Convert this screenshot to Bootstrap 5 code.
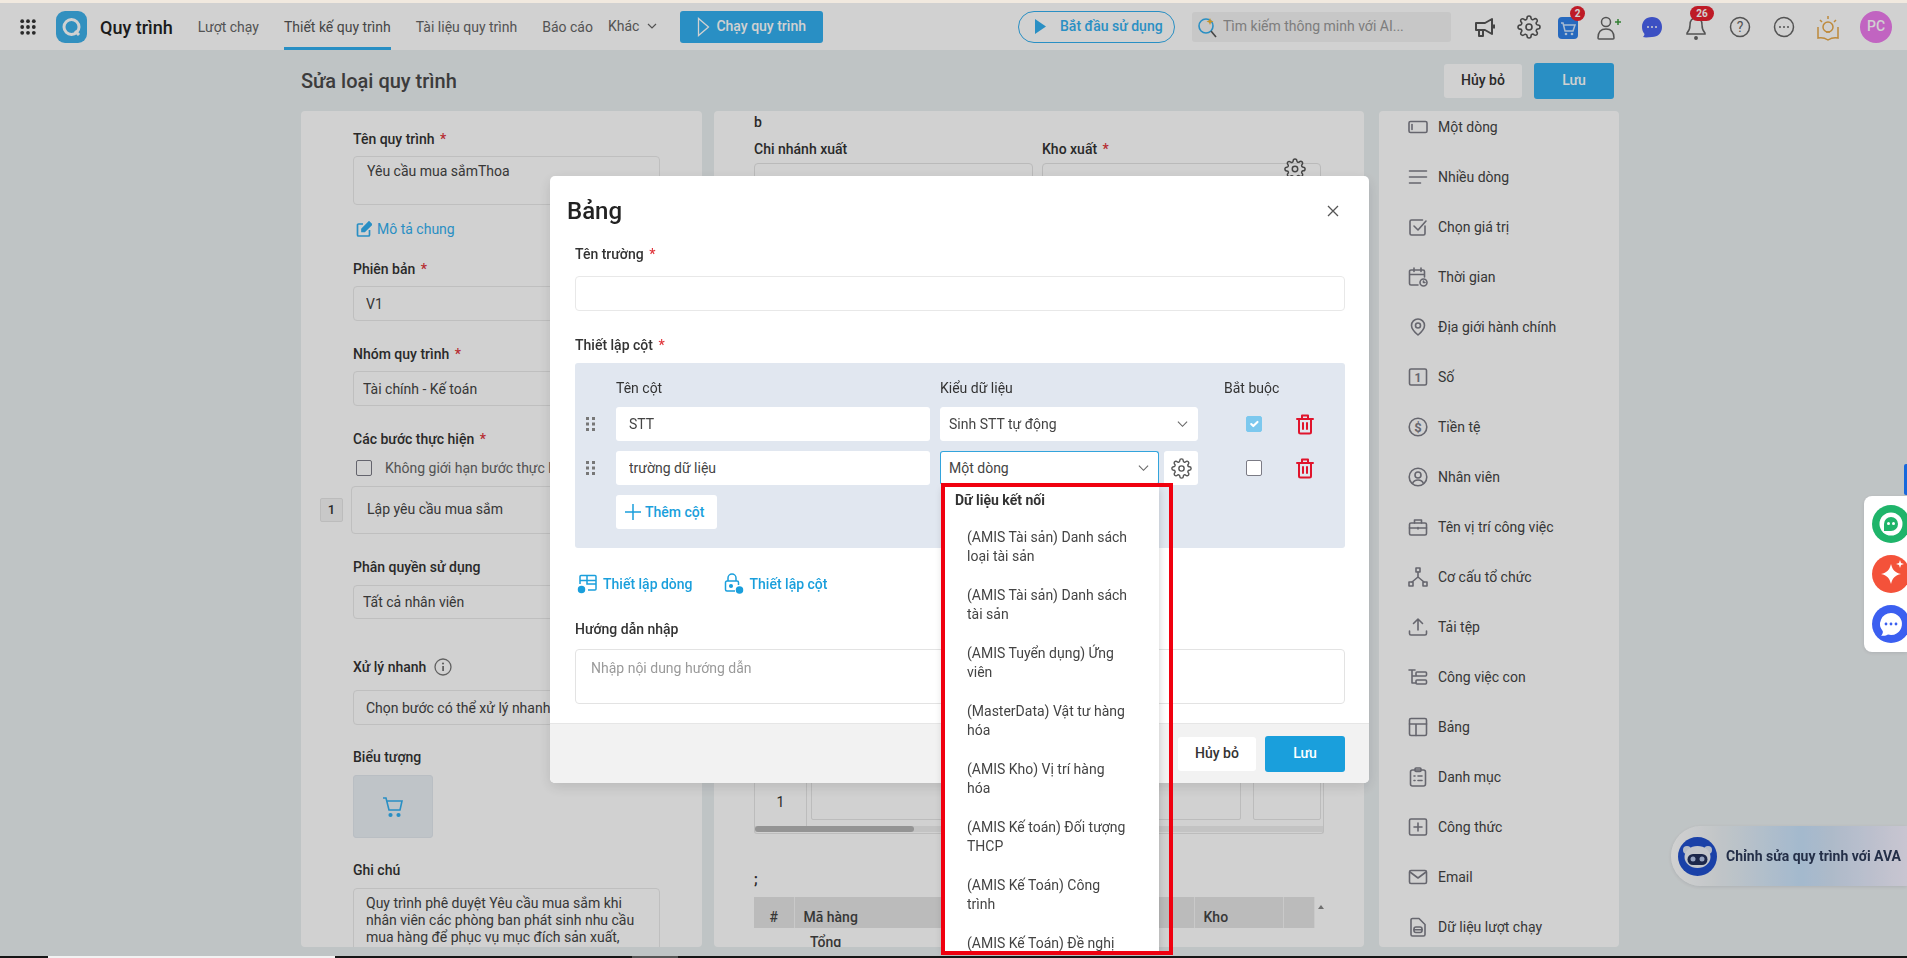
<!DOCTYPE html>
<html lang="vi">
<head>
<meta charset="utf-8">
<title>Sửa loại quy trình</title>
<link href="https://cdn.jsdelivr.net/npm/bootstrap@5.3.0/dist/css/bootstrap.min.css" rel="stylesheet">
<style>
html,body{height:100%;overflow:hidden}
body{font-family:Roboto,"Liberation Sans",sans-serif;font-size:14px;color:#333;background:#eaeff1}
svg{display:block;flex:none}
.ico{fill:none;stroke:#7d7d87;stroke-width:1.6;stroke-linecap:round;stroke-linejoin:round}
.ico.ico-dark{stroke:#555}
.ico.ico-red{stroke:#e0142c;stroke-width:2}
.shell{height:958px;display:flex;flex-direction:column}
.strip-top{height:3px;background:#f1e9df;flex:none}
.strip-bottom{height:2px;flex:none;background:#161616;display:flex}
.seg-white{width:287px;margin-left:48px;background:#f2f2f2}
.seg-grey{width:46px;margin-left:297px;background:#555}
.topbar{height:47px;flex:none;background:#fff;padding:0 15px 0 20px;display:flex;align-items:center;flex-wrap:nowrap}
.brand-logo{margin-left:20px}
.brand-name{margin-left:13px;margin-top:1px;font-size:18px;font-weight:500;color:#222;margin-right:25px;white-space:nowrap}
.top-nav{display:flex;flex-wrap:nowrap;gap:25px;height:47px;align-items:stretch}
.top-nav .nav-link{padding:0;height:47px;line-height:49px;border-bottom:3px solid transparent;color:#666;white-space:nowrap;font-size:14px}
.top-nav .nav-link.current{color:#555;border-bottom-color:#33afef}
.more-link{display:flex;align-items:center;gap:8px;margin-left:-10px;padding-top:2px!important}
.run-btn{margin-left:23px;height:32px;width:143px;display:flex;align-items:center;gap:6px;padding:0 0 0 17px;background:#33afef;border:0;border-radius:3px;color:#fff;font-weight:500;font-size:14px;white-space:nowrap}
.start-pill{margin-left:auto;width:157px;height:32px;border:1.5px solid #33afef;border-radius:16px;display:flex;align-items:center;padding-left:16px;gap:14px;color:#33afef;font-weight:500;background:transparent;white-space:nowrap;font-size:14px}
.ai-search{margin-left:17px;width:259px;height:30px;background:#f3f3f3;border-radius:3px;display:flex;align-items:center;padding-left:4px;gap:5px}
.ai-search input{border:0;background:transparent;outline:0;width:220px;font-size:14px;color:#888;padding:0}
.ai-search input::placeholder{color:#999}
.tool-row{display:flex;align-items:center;margin-left:22px}
.tool-slot{position:relative;width:24px;height:24px;margin-left:20px}
.tool-slot:first-child{margin-left:0}
.tool-slot.shift-cart{margin-left:15px}
.tool-slot.shift-user{margin-left:16px}
.red-dot{position:absolute;top:-9px;left:14px;min-width:15px;height:15px;padding:0 3px;border-radius:8px;background:#e8202f;color:#fff;font-size:10px;font-weight:700;line-height:15px;text-align:center}
.red-dot.wide{width:24px;left:6px;top:-9px}
.avatar-pc{margin-left:20px;width:32px;height:32px;border-radius:50%;background:#ec7aec;color:#fff;font-size:14px;font-weight:500;display:flex;align-items:center;justify-content:center}
.work{flex:1 1 auto;min-height:0;margin-left:301px;width:1318px;display:flex;flex-direction:column;padding-bottom:9px}
.title-row{height:61px;flex:none;display:flex;align-items:center;padding-right:5px}
.title-row h1{font-size:20px;font-weight:500;margin:0;color:#4a4a4a}
.btn-cancel{height:34px;width:78px;background:#fff;border:0;border-radius:3px;font-weight:500;font-size:14px;color:#333;padding:0}
.btn-accent{height:36px;width:80px;background:#33afef;border:0;border-radius:3px;color:#fff;font-weight:500;font-size:14px;padding:0}
.btn-accent.solid{background:#1a9fdc}
.panes{flex:1 1 auto;min-height:0;display:flex}
.pane{background:#fff;border:0;border-radius:4px;overflow:hidden}
.pane-left{width:401px;padding:18px 42px 0 52px}
.pane-mid{width:650px;margin-left:12px;padding:1px 40px 0}
.pane-right{width:240px;margin-left:15px}
.fld{font-weight:500;line-height:20px;color:#333;font-size:14px;margin:0}
.fld i{color:#e0353b;font-style:normal;margin-left:2px}
.form-control.fc{font-size:14px;height:35px;border:1px solid #e9e9e9;border-radius:4px;padding:0 12px;color:#444;box-shadow:none}
.form-control.fc.area{height:49px;padding:6px 13px;line-height:17px;resize:none}
.form-control.fc.tight{padding-left:9px}
.form-control.fc.short{height:34px}
.m7{margin-top:7px}.m8{margin-top:8px}.m13{margin-top:13px}.m14{margin-top:14px}.m20{margin-top:20px}.m22{margin-top:22px}.m23{margin-top:23px}.m38{margin-top:38px}.m9{margin-top:9px}
.desc-link{display:flex;align-items:center;gap:5px;line-height:20px;color:#33afef;margin-left:3px}
.chk-row{display:flex;align-items:center;gap:13px;margin-left:3px;height:20px;white-space:nowrap;color:#666}
.form-check-input.box{width:16px;height:16px;margin:0;border:1.5px solid #7b7b85;border-radius:2px;flex:none}
.form-check-input.box:checked{background-color:#7cc8ee;border-color:#7cc8ee}
.step-row{display:flex;align-items:center;gap:8px;margin-left:-33px;width:340px}
.step-no{width:23px;height:24px;flex:none;border:1px solid #e6e6e6;border-radius:2px;background:#f5f5f5;text-align:center;line-height:22px;font-weight:500;font-size:13px}
.form-control.fc.tall{height:48px;padding:0 0 2px 15px}
.icon-tile{width:80px;height:63px;background:#e9eff5;border:1px solid #e2e8ee;border-radius:3px;display:flex;align-items:center;justify-content:center}
.form-control.fc.notes{height:90px;padding:6px 12px;line-height:17px;resize:none}
.field-pair{display:flex;gap:9px}
.field-pair>div{flex:0 0 279px;position:relative}
.form-select.fs{height:35px;font-size:14px;border:1px solid #e3e3e3;border-radius:4px;padding:0 30px 0 8px;background-image:url("data:image/svg+xml,%3csvg xmlns='http://www.w3.org/2000/svg' viewBox='0 0 12 8'%3e%3cpath fill='none' stroke='%23666' stroke-width='1.200' d='M1 1.500l5 5 5-5'/%3e%3c/svg%3e");background-size:11px 8px;background-position:right 9px center;box-shadow:none;color:#444}
.cog-over{position:absolute;right:15px;top:19px}
.hidden-gap{height:574px}
.row-block{width:570px;height:62px;border:1px solid #e6e6e6;border-radius:0 0 3px 3px;border-top:0;display:flex;flex-wrap:wrap;align-content:flex-start;position:relative}
.row-no{width:52px;height:55px;border-right:1px solid #e6e6e6;text-align:center;line-height:60px;font-size:14px;padding-left:0}
.row-cell{height:48px;border:1px solid #e6e6e6;border-radius:2px;margin-left:4px;width:430px}
.row-cell.narrow{margin-left:12px;width:68px}
.h-scroll{position:absolute;left:0;right:0;bottom:1px;height:6px;background:#eee}
.h-thumb{width:159px;height:6px;border-radius:3px;background:#b5b5b5}
.semi{margin:35px 0 0;line-height:20px;font-weight:700}
.grid-table{width:560px;margin:8px 0 0;table-layout:fixed}
.grid-table th{background:#e5e5e5;height:31px;padding:0 0 0 9px;font-weight:500;border-bottom:0;border-right:1px solid #f6f6f6;font-size:14px;color:#444}
.grid-table th.hash{text-align:center;padding:0;width:40px}
.grid-table th.wide-col{width:400px}
.grid-table th.store-col{width:89px}
.grid-table th.end-col{width:31px}
.grid-table td{padding:4px 0 0 16px;font-weight:500;border:0;color:#444;background:transparent}
.up-arrow{position:absolute;right:-10px;top:5px;width:0;height:0;border:3px solid transparent;border-bottom:4px solid #888}
.table-wrap{position:relative;width:560px}
.field-list{margin-top:-9px}
.field-list .list-group-item{height:50px;padding:0 0 0 29px;display:flex;align-items:center;gap:10px;border:0;background:transparent;color:#444;font-size:14px}
.dim-layer.modal-backdrop{top:3px;height:953px;width:100%;background:#000;opacity:.18}
.dialog-wrap{position:fixed;left:550px;top:176px;width:819px;z-index:1055}
.dialog-wrap .modal-content{background:#fff;border:0;border-radius:5px;box-shadow:0 4px 14px rgba(0,0,0,.12)}
.dialog-wrap .modal-header{height:60px;padding:10px 29px 0 17px;border:0;align-items:center}
.dialog-wrap .modal-title{font-size:24px;font-weight:500;color:#222;margin:0}
.x-btn{border:0;background:transparent;padding:0;width:14px;height:14px}
.dialog-wrap .modal-body{padding:8px 24px 19px 25px;flex:none}
.form-control.fc.blank{height:35px;border-color:#e8e8e8}
.col-panel{margin-top:8px;height:185px;background:#e1e7f0;border-radius:3px;padding-top:15px}
.col-line{display:flex;align-items:center}
.col-head{height:20px;margin-bottom:9px}
.col-row{height:34px;margin-bottom:10px}
.drag-col{width:41px;flex:none;display:flex;padding-left:11px}
.name-col{width:314px;flex:none}
.type-col{width:258px;flex:none;margin-left:10px;display:flex;gap:5px;position:relative}
.req-col{width:60px;margin-left:26px;flex:none;display:flex;justify-content:center;white-space:nowrap}
.req-col.head{justify-content:flex-start}
.del-col{width:42px;flex:none;display:flex;justify-content:center}
.form-control.fc.cell{height:34px;border:0;border-radius:3px;padding:0 13px}
.form-select.fs.cell{height:34px;border:1px solid #fff;border-radius:3px;background-color:#fff;padding-left:8px}
.form-select.fs.cell.focused{border-color:#33a4dc;border-bottom-color:#fff;width:219px;flex:none}
.gear-btn{width:34px;height:34px;border:0;border-radius:3px;background:#fff;display:flex;align-items:center;justify-content:center;padding:0}
.add-col{margin-left:41px;width:101px;height:34px;border:0;border-radius:3px;background:#fff;color:#1a9fdc;font-weight:500;font-size:14px;display:flex;align-items:center;gap:4px;padding:0 0 0 9px}
.link-row{display:flex;align-items:center;margin-top:26px;height:20px;padding-left:2px;color:#1a9fdc;font-weight:500}
.link-row span{margin-left:6px}
.link-row svg+span+svg{margin-left:31px}
.form-control.fc.guide{height:55px;padding:8px 15px;border-color:#e3e3e3;resize:none}
.form-control.fc.guide::placeholder{color:#9a9a9a}
.m25{margin-top:25px}.m10{margin-top:10px}.m12{margin-top:12px}.m24{margin-top:24px}
.dialog-wrap .modal-footer{height:60px;padding:0 24px 0 0;background:#f2f2f2;border-top:1px solid #e6e6e6;gap:9px;border-radius:0 0 5px 5px;flex-wrap:nowrap}
.dialog-wrap .modal-footer>*{margin:0}
.menu-list{position:absolute;display:block;left:3px;top:36px;width:216px;height:464px;padding:4px 0 0;margin:0;overflow:hidden;background:#fff;border:0;border-radius:0;box-shadow:0 2px 8px rgba(0,0,0,.18);z-index:3;font-size:14px;min-width:0}
.menu-list .dropdown-header{padding:0 0 0 12px;line-height:19px;font-size:14px;font-weight:700;color:#333;margin-bottom:8px}
.menu-list .dropdown-item{padding:10px 0 10px 24px;line-height:19px;color:#444;white-space:nowrap;font-size:14px}
.red-frame{position:fixed;left:941px;top:483px;width:232px;height:472px;border:4px solid #f0000f;z-index:1070;pointer-events:none}
.side-dock{position:fixed;left:1864px;top:496px;width:43px;height:156px;background:#fff;border-radius:8px 0 0 8px;z-index:1060;overflow:hidden;display:flex;flex-direction:column;gap:12px;padding:9px 0 0 8px;box-shadow:0 1px 4px rgba(0,0,0,.1)}
.dock-ball{width:38px;height:38px;flex:none}
.blue-tab{position:fixed;left:1904px;top:464px;width:3px;height:31px;background:#1668dc;border-radius:2px 0 0 2px;z-index:1060}
.ava-pill{position:fixed;left:1671px;top:826px;width:236px;height:60px;border-radius:30px 0 0 30px;background:linear-gradient(90deg,#fff 0%,#ecf1f4 20%,#c8e2fb 55%,#d4e3f6 68%,#f5f1ff 100%);display:flex;align-items:center;padding-left:7px;gap:9px;font-weight:700;color:#2c3a58;font-size:14px;white-space:nowrap;z-index:900;box-shadow:0 1px 4px rgba(0,0,0,.1)}
</style>
</head>
<body>
<svg class="d-none"><defs>
<symbol id="gear" viewBox="0 0 24 24"><circle cx="12" cy="12" r="3"/><path d="M19.4 15a1.65 1.65 0 0 0 .33 1.82l.06.06a2 2 0 0 1 0 2.83 2 2 0 0 1-2.83 0l-.06-.06a1.65 1.65 0 0 0-1.82-.33 1.65 1.65 0 0 0-1 1.51V21a2 2 0 0 1-2 2 2 2 0 0 1-2-2v-.09A1.65 1.65 0 0 0 9 19.4a1.65 1.65 0 0 0-1.82.33l-.06.06a2 2 0 0 1-2.83 0 2 2 0 0 1 0-2.83l.06-.06a1.65 1.65 0 0 0 .33-1.82 1.65 1.65 0 0 0-1.51-1H3a2 2 0 0 1-2-2 2 2 0 0 1 2-2h.09A1.65 1.65 0 0 0 4.6 9a1.65 1.65 0 0 0-.33-1.82l-.06-.06a2 2 0 0 1 0-2.83 2 2 0 0 1 2.83 0l.06.06a1.65 1.65 0 0 0 1.82.33H9a1.65 1.65 0 0 0 1-1.51V3a2 2 0 0 1 2-2 2 2 0 0 1 2 2v.09a1.65 1.65 0 0 0 1 1.51 1.65 1.65 0 0 0 1.82-.33l.06-.06a2 2 0 0 1 2.83 0 2 2 0 0 1 0 2.83l-.06.06a1.65 1.65 0 0 0-.33 1.82V9a1.65 1.65 0 0 0 1.51 1H21a2 2 0 0 1 2 2 2 2 0 0 1-2 2h-.09a1.65 1.65 0 0 0-1.51 1z"/></symbol>
<symbol id="trash" viewBox="0 0 20 22"><path d="M2 6h16M7 6V2.500h6V6M4 6v13a1.500 1.500 0 0 0 1.500 1.500h9A1.500 1.500 0 0 0 16 19V6M8 10v6M12 10v6"/></symbol>
<symbol id="drag" viewBox="0 0 10 14"><g fill="#777"><rect x="0" y="0" width="3" height="3"/><rect x="6" y="0" width="3" height="3"/><rect x="0" y="5.500" width="3" height="3"/><rect x="6" y="5.500" width="3" height="3"/><rect x="0" y="11" width="3" height="3"/><rect x="6" y="11" width="3" height="3"/></g></symbol>
</defs></svg>

<div class="shell">
  <div class="strip-top"></div>
  <nav class="topbar">
    <svg width="16" height="16" viewBox="0 0 16 16" fill="#333"><circle cx="2.200" cy="2.200" r="1.900"/><circle cx="8" cy="2.200" r="1.900"/><circle cx="13.800" cy="2.200" r="1.900"/><circle cx="2.200" cy="8" r="1.900"/><circle cx="8" cy="8" r="1.900"/><circle cx="13.800" cy="8" r="1.900"/><circle cx="2.200" cy="13.800" r="1.900"/><circle cx="8" cy="13.800" r="1.900"/><circle cx="13.800" cy="13.800" r="1.900"/></svg>
    <svg class="brand-logo" width="31" height="32" viewBox="0 0 31 32"><rect width="31" height="32" rx="9" fill="#3eb0ea"/><circle cx="15.500" cy="16" r="7.500" fill="none" stroke="#fff" stroke-width="3"/><path d="M19 20l4 4" stroke="#fff" stroke-width="3"/></svg>
    <span class="brand-name">Quy trình</span>
    <div class="nav top-nav">
      <a class="nav-link" href="#">Lượt chạy</a>
      <a class="nav-link current" href="#">Thiết kế quy trình</a>
      <a class="nav-link" href="#">Tài liệu quy trình</a>
      <a class="nav-link" href="#">Báo cáo</a>
      <a class="nav-link more-link" href="#">Khác <svg width="10" height="6" viewBox="0 0 10 6" fill="none" stroke="#666" stroke-width="1.200"><path d="M1 1l4 4 4-4"/></svg></a>
    </div>
    <button class="btn run-btn" type="button"><svg width="13" height="20" viewBox="0 0 13 20" fill="none" stroke="#fff" stroke-width="1.300"><path d="M1.500 1.500v17l10-8.500z"/></svg>Chạy quy trình</button>
    <button class="btn start-pill" type="button"><svg width="11" height="15" viewBox="0 0 11 15" fill="#33afef"><path d="M0 0l11 7.500L0 15z"/></svg>Bắt đầu sử dụng</button>
    <div class="ai-search">
      <svg width="22" height="24" viewBox="0 0 22 24" fill="none"><circle cx="10" cy="11" r="7" stroke="#33afef" stroke-width="1.600"/><path d="M15 16l5 6" stroke="#555" stroke-width="1.600"/><path d="M14 3l1 2.500 2.500 1-2.500 1-1 2.500-1-2.500-2.500-1 2.500-1z" fill="#f2b431"/></svg>
      <input type="text" placeholder="Tìm kiếm thông minh với AI...">
    </div>
    <div class="tool-row">
      <div class="tool-slot"><svg width="24" height="24" viewBox="0 0 24 24" fill="none" stroke="#555" stroke-width="2" stroke-linejoin="round"><path d="M3 8h9l7-4v15l-7-4H3z"/><path d="M6 15v6h4v-6M21 9.500v4"/></svg></div>
      <div class="tool-slot"><svg class="ico ico-dark" width="24" height="24"><use href="#gear"/></svg></div>
      <div class="tool-slot shift-cart"><svg width="24" height="26" viewBox="0 0 24 26"><rect x="2" y="2" width="20" height="22" rx="4" fill="#2f80e8"/><path d="M5 8h2l2 8h8l2-6H8" fill="none" stroke="#cfe5ff" stroke-width="1.500"/><circle cx="10" cy="19" r="1.300" fill="#cfe5ff"/><circle cx="16" cy="19" r="1.300" fill="#cfe5ff"/></svg><span class="red-dot">2</span></div>
      <div class="tool-slot shift-user"><svg width="26" height="26" viewBox="0 0 26 26" fill="none" stroke="#666" stroke-width="1.500"><circle cx="10" cy="7" r="4.500"/><path d="M2 23c0-6 3-9 8-9s8 3 8 9c0 1-1 1-1 1H3s-1 0-1-1z"/><path d="M19 7h6M22 4v6" stroke="#3f9d3f"/></svg></div>
      <div class="tool-slot"><svg width="24" height="24" viewBox="0 0 24 24"><path d="M12 2c6 0 10 4 10 10s-4 10-10 10c-3 0-6 1-9 0 1-1 1.500-2 1.500-3C3 17 2 15 2 12 2 6 6 2 12 2z" fill="#4a62ee"/><circle cx="8" cy="12" r="1" fill="#fff"/><circle cx="12" cy="12" r="1" fill="#fff"/><circle cx="16" cy="12" r="1" fill="#fff"/></svg></div>
      <div class="tool-slot"><svg width="24" height="26" viewBox="0 0 24 26" fill="none" stroke="#666" stroke-width="1.500"><path d="M12 3c-4 0-6 3-6 7 0 5-2 7-3 8v1h18v-1c-1-1-3-3-3-8 0-4-2-7-6-7z"/><circle cx="12" cy="23" r="1.200" fill="#666"/></svg><span class="red-dot wide">26</span></div>
      <div class="tool-slot"><svg width="24" height="24" viewBox="0 0 24 24"><circle cx="12" cy="12" r="9.500" fill="none" stroke="#666" stroke-width="1.500"/><text x="12" y="17" font-size="14" text-anchor="middle" fill="#666" font-family="Roboto">?</text></svg></div>
      <div class="tool-slot"><svg width="24" height="24" viewBox="0 0 24 24"><circle cx="12" cy="12" r="9.500" fill="none" stroke="#666" stroke-width="1.500"/><circle cx="8" cy="12" r="1" fill="#666"/><circle cx="12" cy="12" r="1" fill="#666"/><circle cx="16" cy="12" r="1" fill="#666"/></svg></div>
      <div class="tool-slot"><svg width="24" height="26" viewBox="0 0 24 26" fill="none" stroke="#e8a94a" stroke-width="1.500"><path d="M2 12v11c4-1 7 0 10 2 3-2 6-3 10-2V12"/><circle cx="12" cy="12" r="5"/><path d="M10 17h4M12 1v3M4 5l2 2M20 5l-2 2"/></svg></div>
      <div class="avatar-pc">PC</div>
    </div>
  </nav>

  <main class="work">
    <div class="title-row">
      <h1>Sửa loại quy trình</h1>
      <div class="ms-auto d-flex align-items-center gap-2">
        <button class="btn btn-cancel me-1" type="button">Hủy bỏ</button>
        <button class="btn btn-accent" type="button">Lưu</button>
      </div>
    </div>
    <div class="panes">
      <section class="pane pane-left">
        <p class="fld">Tên quy trình <i>*</i></p>
        <textarea class="form-control fc area m7">Yêu cầu mua sắmThoa</textarea>
        <a class="desc-link m14 text-decoration-none" href="#"><svg width="16" height="16" viewBox="0 0 16 16" fill="none" stroke="#33afef" stroke-width="1.700"><path d="M7 3H2.500A1 1 0 0 0 1.500 4v10a1 1 0 0 0 1 1h10a1 1 0 0 0 1-1V9"/><path d="M6 10.500V8l7-7 2.500 2.500-7 7z" fill="#33afef"/></svg>Mô tả chung</a>
        <p class="fld m20">Phiên bản <i>*</i></p>
        <input class="form-control fc m7" value="V1">
        <p class="fld m23">Nhóm quy trình <i>*</i></p>
        <input class="form-control fc tight m7" value="Tài chính - Kế toán">
        <p class="fld m23">Các bước thực hiện <i>*</i></p>
        <div class="chk-row m9"><input class="form-check-input box" type="checkbox"><span>Không giới hạn bước thực hiện</span></div>
        <div class="step-row m8"><span class="step-no">1</span><input class="form-control fc tall" value="Lập yêu cầu mua sắm"></div>
        <p class="fld m23">Phân quyền sử dụng</p>
        <input class="form-control fc tight short m8" value="Tất cả nhân viên">
        <p class="fld m38 d-flex align-items-center gap-2">Xử lý nhanh <svg width="18" height="18" viewBox="0 0 18 18"><circle cx="9" cy="9" r="8" fill="none" stroke="#777" stroke-width="1.300"/><rect x="8.200" y="8" width="1.800" height="5" fill="#777"/><circle cx="9" cy="5.500" r="1.100" fill="#777"/></svg></p>
        <input class="form-control fc m13" value="Chọn bước có thể xử lý nhanh">
        <p class="fld m22">Biểu tượng</p>
        <div class="icon-tile m8"><svg width="22" height="22" viewBox="0 0 22 22" fill="none" stroke="#33afef" stroke-width="1.600"><path d="M1 2h3l3 12h11l2-9H5"/><circle cx="8.500" cy="19" r="1.300" fill="#33afef"/><circle cx="16.500" cy="19" r="1.300" fill="#33afef"/></svg></div>
        <p class="fld m22">Ghi chú</p>
        <textarea class="form-control fc notes m8">Quy trình phê duyệt Yêu cầu mua sắm khi nhân viên các phòng ban phát sinh nhu cầu mua hàng để phục vụ mục đích sản xuất,</textarea>
      </section>

      <section class="pane pane-mid">
        <p class="fld">b</p>
        <div class="field-pair m7">
          <div><p class="fld">Chi nhánh xuất</p><select class="form-select fs mt-1"><option></option></select></div>
          <div><p class="fld">Kho xuất <i>*</i></p><select class="form-select fs mt-1"><option></option></select><svg class="ico ico-dark cog-over" width="22" height="22"><use href="#gear"/></svg></div>
        </div>
        <div class="hidden-gap"></div>
        <div class="row-block">
          <div class="row-no">1</div>
          <div class="row-cell"></div>
          <div class="row-cell narrow"></div>
          <div class="h-scroll"><div class="h-thumb"></div></div>
        </div>
        <p class="semi">;</p>
        <div class="table-wrap">
          <table class="table grid-table">
            <thead><tr><th class="hash" scope="col">#</th><th class="wide-col" scope="col">Mã hàng</th><th class="store-col" scope="col">Kho</th><th class="end-col" scope="col"></th></tr></thead>
            <tbody><tr><td></td><td>Tổng</td><td></td><td></td></tr></tbody>
          </table>
          <span class="up-arrow"></span>
        </div>
      </section>

      <aside class="pane pane-right">
        <ul class="list-group list-group-flush field-list">
          <li class="list-group-item"><svg class="ico" width="20" height="20" viewBox="0 0 20 20"><rect x="1" y="4.500" width="18" height="11" rx="1.500"/><path d="M4 7.500v5"/></svg>Một dòng</li>
          <li class="list-group-item"><svg class="ico" width="20" height="20" viewBox="0 0 20 20"><path d="M1.500 4h17M1.500 10h17M1.500 16h11"/></svg>Nhiều dòng</li>
          <li class="list-group-item"><svg class="ico" width="20" height="20" viewBox="0 0 20 20"><path d="M17 9v7.500a1.500 1.500 0 0 1-1.500 1.500h-12A1.500 1.500 0 0 1 2 16.500v-12A1.500 1.500 0 0 1 3.500 3h11"/><path d="M6 9l4 4 8-9"/></svg>Chọn giá trị</li>
          <li class="list-group-item"><svg class="ico" width="20" height="20" viewBox="0 0 20 20"><path d="M10 18H3a1.500 1.500 0 0 1-1.500-1.500v-12A1.500 1.500 0 0 1 3 3h12a1.500 1.500 0 0 1 1.500 1.500V10M1.500 7.500h15M6 1v3.500M13 1v3.500"/><circle cx="15.500" cy="15.500" r="3.500"/><path d="M15.500 14v1.500h1.500"/></svg>Thời gian</li>
          <li class="list-group-item"><svg class="ico" width="20" height="20" viewBox="0 0 20 20"><path d="M10 18c-3-2.500-6.500-5.500-6.500-9.500a6.500 6.500 0 0 1 13 0c0 4-3.500 7-6.500 9.500z"/><circle cx="10" cy="8.500" r="2.500"/></svg>Địa giới hành chính</li>
          <li class="list-group-item"><svg class="ico" width="20" height="20" viewBox="0 0 20 20"><rect x="1.500" y="2" width="17" height="16" rx="1.500"/><text x="10" y="14.500" font-size="12" font-weight="700" text-anchor="middle" fill="#7d7d87" stroke="none" font-family="Roboto">1</text></svg>Số</li>
          <li class="list-group-item"><svg class="ico" width="20" height="20" viewBox="0 0 20 20"><circle cx="10" cy="10" r="8.800"/><text x="10" y="15" font-size="13" font-weight="700" text-anchor="middle" fill="#7d7d87" stroke="none" font-family="Roboto">$</text></svg>Tiền tệ</li>
          <li class="list-group-item"><svg class="ico" width="20" height="20" viewBox="0 0 20 20"><circle cx="10" cy="10" r="8.800"/><circle cx="10" cy="8" r="3"/><path d="M4.500 16.500c1-2.500 3-3.500 5.500-3.500s4.500 1 5.500 3.500"/></svg>Nhân viên</li>
          <li class="list-group-item"><svg class="ico" width="20" height="20" viewBox="0 0 20 20"><rect x="1.500" y="6" width="17" height="12" rx="1.500"/><path d="M6.500 6V3h7v3M1.500 11h17M10 10.500v1.500"/></svg>Tên vị trí công việc</li>
          <li class="list-group-item"><svg class="ico" width="20" height="20" viewBox="0 0 20 20"><rect x="8" y="1" width="4" height="4"/><rect x="1" y="15" width="4" height="4"/><rect x="15" y="15" width="4" height="4"/><path d="M10 5v5l-6 5M10 10l6 5"/></svg>Cơ cấu tổ chức</li>
          <li class="list-group-item"><svg class="ico" width="20" height="20" viewBox="0 0 20 20"><path d="M10 13V2M5.500 6.500L10 2l4.500 4.500M1.500 14v2.500a1.500 1.500 0 0 0 1.500 1.500h14a1.500 1.500 0 0 0 1.500-1.500V14"/></svg>Tải tệp</li>
          <li class="list-group-item"><svg class="ico" width="20" height="20" viewBox="0 0 20 20"><path d="M1 3h6M4 3v13h4M4 9h4"/><rect x="8" y="5" width="10.500" height="4" rx="1"/><rect x="8" y="13" width="10.500" height="4" rx="1"/></svg>Công việc con</li>
          <li class="list-group-item"><svg class="ico" width="20" height="20" viewBox="0 0 20 20"><rect x="1.500" y="1.500" width="17" height="17" rx="1.500"/><path d="M1.500 7h17M8 7v11.500"/></svg>Bảng</li>
          <li class="list-group-item"><svg class="ico" width="20" height="20" viewBox="0 0 20 20"><rect x="2.500" y="3" width="15" height="16" rx="2"/><rect x="7" y="1" width="6" height="3.500" rx="1"/><path d="M6 9h1M10 9h4M6 13.500h1M10 13.500h4"/></svg>Danh mục</li>
          <li class="list-group-item"><svg class="ico" width="20" height="20" viewBox="0 0 20 20"><rect x="1.500" y="2" width="17" height="16" rx="1.500"/><path d="M10 6v8M6 10h8"/></svg>Công thức</li>
          <li class="list-group-item"><svg class="ico" width="20" height="20" viewBox="0 0 20 20"><rect x="1.500" y="3.500" width="17" height="13" rx="1.500"/><path d="M2 5l8 6 8-6"/></svg>Email</li>
          <li class="list-group-item"><svg class="ico" width="20" height="20" viewBox="0 0 20 20"><path d="M3 3a1.500 1.500 0 0 1 1.500-1.500H11l6 6v10a1.500 1.500 0 0 1-1.500 1.500h-11A1.500 1.500 0 0 1 3 17.500z"/><rect x="6" y="10" width="8" height="5.500" rx="2"/><path d="M6 12.700h8"/></svg>Dữ liệu lượt chạy</li>
        </ul>
      </aside>
    </div>
  </main>
  <div class="strip-bottom"><div class="seg-white"></div><div class="seg-grey"></div></div>
</div>

<div class="ava-pill">
  <svg width="39" height="39" viewBox="0 0 39 39"><circle cx="19.500" cy="19.500" r="19.500" fill="#2050cd"/><circle cx="9" cy="13" r="4" fill="#dfe6f2"/><circle cx="30" cy="13" r="4" fill="#dfe6f2"/><ellipse cx="19.500" cy="20" rx="13" ry="11" fill="#eef2f8"/><rect x="9.500" y="17" width="20" height="11" rx="5.500" fill="#23305c"/><circle cx="15" cy="22" r="2.500" fill="#b8c8ec"/><circle cx="24" cy="22" r="2.500" fill="#b8c8ec"/></svg>
  <span>Chỉnh sửa quy trình với AVA</span>
</div>

<div class="modal-backdrop show dim-layer"></div>

<div class="dialog-wrap">
  <div class="modal-content">
    <div class="modal-header">
      <h5 class="modal-title">Bảng</h5>
      <button class="x-btn" type="button" aria-label="Đóng"><svg width="14" height="14" viewBox="0 0 14 14" fill="none" stroke="#555" stroke-width="1.300"><path d="M2 2l10 10M12 2L2 12"/></svg></button>
    </div>
    <div class="modal-body">
      <p class="fld">Tên trường <i>*</i></p>
      <input class="form-control fc blank m12">
      <p class="fld m24">Thiết lập cột <i>*</i></p>
      <div class="col-panel">
        <div class="col-line col-head">
          <div class="drag-col"></div><div class="name-col">Tên cột</div><div class="type-col">Kiểu dữ liệu</div><div class="req-col head">Bắt buộc</div>
        </div>
        <div class="col-line col-row">
          <div class="drag-col"><svg width="10" height="14"><use href="#drag"/></svg></div>
          <div class="name-col"><input class="form-control fc cell" value="STT"></div>
          <div class="type-col"><select class="form-select fs cell"><option>Sinh STT tự động</option></select></div>
          <div class="req-col"><input class="form-check-input box" type="checkbox" checked></div>
          <div class="del-col"><svg class="ico ico-red" width="20" height="22"><use href="#trash"/></svg></div>
        </div>
        <div class="col-line col-row">
          <div class="drag-col"><svg width="10" height="14"><use href="#drag"/></svg></div>
          <div class="name-col"><input class="form-control fc cell" value="trường dữ liệu"></div>
          <div class="type-col">
            <select class="form-select fs cell focused"><option>Một dòng</option></select>
            <button class="gear-btn" type="button"><svg class="ico ico-dark" width="21" height="21"><use href="#gear"/></svg></button>
            <div class="dropdown-menu menu-list">
              <h6 class="dropdown-header">Dữ liệu kết nối</h6>
              <a class="dropdown-item" href="#">(AMIS Tài sản) Danh sách<br>loại tài sản</a>
              <a class="dropdown-item" href="#">(AMIS Tài sản) Danh sách<br>tài sản</a>
              <a class="dropdown-item" href="#">(AMIS Tuyển dụng) Ứng<br>viên</a>
              <a class="dropdown-item" href="#">(MasterData) Vật tư hàng<br>hóa</a>
              <a class="dropdown-item" href="#">(AMIS Kho) Vị trí hàng<br>hóa</a>
              <a class="dropdown-item" href="#">(AMIS Kế toán) Đối tượng<br>THCP</a>
              <a class="dropdown-item" href="#">(AMIS Kế Toán) Công<br>trình</a>
              <a class="dropdown-item" href="#">(AMIS Kế Toán) Đề nghị</a>
            </div>
          </div>
          <div class="req-col"><input class="form-check-input box" type="checkbox"></div>
          <div class="del-col"><svg class="ico ico-red" width="20" height="22"><use href="#trash"/></svg></div>
        </div>
        <button class="add-col" type="button"><svg width="16" height="16" viewBox="0 0 16 16" stroke="#1a9fdc" stroke-width="1.500"><path d="M8 0v16M0 8h16"/></svg>Thêm cột</button>
      </div>
      <div class="link-row">
        <svg width="20" height="20" viewBox="0 0 20 20" fill="none" stroke="#1a9fdc" stroke-width="1.500"><path d="M3 10V2.500A1 1 0 0 1 4 1.500h14a1 1 0 0 1 1 1V15a1 1 0 0 1-1 1h-7M3 6.500h16M10 2v8h9"/><circle cx="4.500" cy="15.500" r="3" fill="#1a9fdc"/></svg><span>Thiết lập dòng</span>
        <svg width="20" height="22" viewBox="0 0 20 22" fill="none" stroke="#1a9fdc" stroke-width="1.500"><path d="M4 8V5a4 4 0 0 1 8 0v3M11 18H3a1.500 1.500 0 0 1-1.500-1.500V9.500A1.500 1.500 0 0 1 3 8h10a1.500 1.500 0 0 1 1.500 1.500V12"/><circle cx="7" cy="13" r="1.300" fill="#1a9fdc"/><circle cx="15.500" cy="17" r="3" fill="#1a9fdc"/></svg><span>Thiết lập cột</span>
      </div>
      <p class="fld m25">Hướng dẫn nhập</p>
      <textarea class="form-control fc guide m10" placeholder="Nhập nội dung hướng dẫn"></textarea>
    </div>
    <div class="modal-footer">
      <button class="btn btn-cancel" type="button">Hủy bỏ</button>
      <button class="btn btn-accent solid" type="button">Lưu</button>
    </div>
  </div>
</div>

<div class="red-frame"></div>
<div class="blue-tab"></div>
<div class="side-dock">
  <svg class="dock-ball" viewBox="0 0 38 38"><circle cx="19" cy="19" r="19" fill="#1fb46a"/><circle cx="19" cy="19" r="11.500" fill="#fff"/><path d="M12 19a7 7 0 1 1 7 7h-7z" fill="#1fb46a"/><circle cx="16.500" cy="18.500" r="1.500" fill="#fff"/><circle cx="21.500" cy="18.500" r="1.500" fill="#fff"/></svg>
  <svg class="dock-ball" viewBox="0 0 38 38"><circle cx="19" cy="19" r="19" fill="#f4523a"/><path d="M19 9c1.500 6 4 8.500 10 10-6 1.500-8.500 4-10 10-1.500-6-4-8.500-10-10 6-1.500 8.500-4 10-10z" fill="#fff"/><path d="M28 5l1 3 3 1-3 1-1 3-1-3-3-1 3-1z" fill="#fff"/></svg>
  <svg class="dock-ball" viewBox="0 0 38 38"><circle cx="19" cy="19" r="19" fill="#3b5ff0"/><path d="M19 8a11 11 0 1 1-3 21.600c-2 1.400-4.500 1.400-7 1 1.500-1.300 2-2.700 1.800-4.400A11 11 0 0 1 19 8z" fill="#fff"/><circle cx="14" cy="19" r="1.400" fill="#3b5ff0"/><circle cx="19" cy="19" r="1.400" fill="#3b5ff0"/><circle cx="24" cy="19" r="1.400" fill="#3b5ff0"/></svg>
</div>
<script src="https://cdn.jsdelivr.net/npm/bootstrap@5.3.0/dist/js/bootstrap.bundle.min.js"></script>
</body>
</html>
